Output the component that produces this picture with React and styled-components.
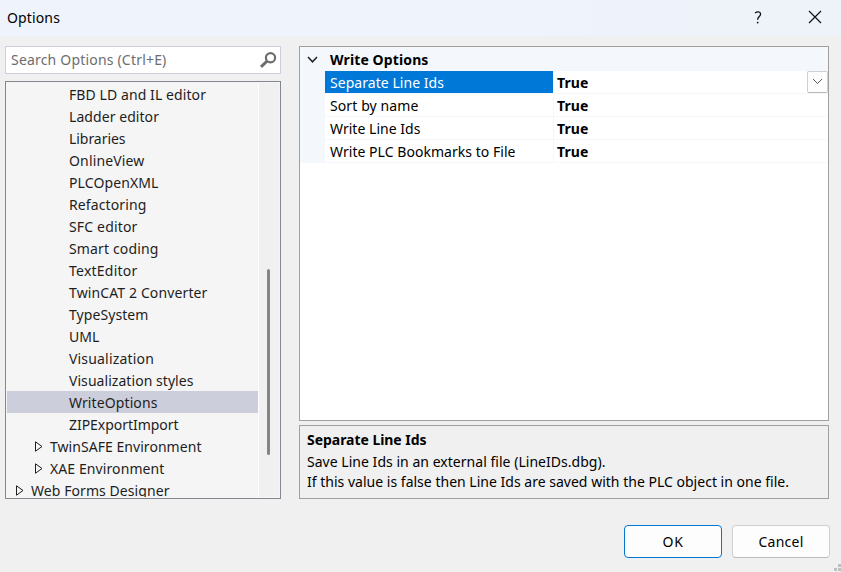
import React, { useLayoutEffect, useRef, useState } from "react";
import styled, { createGlobalStyle } from "styled-components";

const GlobalStyle = createGlobalStyle`
  *, *::before, *::after { box-sizing: border-box; }
  body { margin: 0; overflow: hidden; }
`;

const Dialog = styled.div`
  position: relative;
  display: flex;
  flex-direction: column;
  width: 841px;
  height: 572px;
  overflow: hidden;
  background: #f0f0f0;
  color: #000;
  font-family: "Noto Sans", "Open Sans", sans-serif;
  font-size: 14px;
  line-height: 20px;
`;

const TitleBar = styled.header`
  display: flex;
  align-items: center;
  height: 36px;
  flex: none;
  padding: 0 19px 2px 7px;
  background: linear-gradient(90deg, #eef3fc 0 65%, #eef3f9);
`;

const TitleText = styled.div`
  flex: 1;
  padding-top: 1px;
`;

const TitleButton = styled.button`
  display: flex;
  padding: 0;
  border: 0;
  background: none;
  margin-left: ${(p) => p.$gap || 0}px;
`;

const Content = styled.main`
  display: flex;
  flex: none;
  gap: 18px;
  height: 463px;
  padding: 10px 12px 0 5px;
`;

const Sidebar = styled.section`
  display: flex;
  flex-direction: column;
  gap: 7px;
  width: 276px;
`;

const SearchBox = styled.div`
  display: flex;
  flex: none;
  align-items: center;
  justify-content: space-between;
  height: 28px;
  padding: 0 3px 0 5px;
  border: 1px solid #cccedb;
  background: #fff;
  color: #6d6d6d;
`;

const Tree = styled.div`
  display: flex;
  flex: none;
  height: 418px;
  border: 1px solid #828790;
  background: #f5f5f5;
  color: #1e1e1e;
`;

const TreeList = styled.div`
  width: 252px;
  height: 415px;
  padding: 1px 0 0 1px;
  overflow: hidden;
`;

const TreeRow = styled.div`
  display: flex;
  align-items: center;
  height: 22px;
  padding: 1px 0 0 ${(p) => p.$indent}px;
  background: ${(p) => (p.$selected ? "#cccedb" : "transparent")};
`;

const Expander = styled.svg`
  flex: none;
  margin-right: 7px;
`;

const ScrollTrack = styled.div`
  width: 21px;
  margin: 1px 1px 1px 0;
  padding: 186px 0 0 8px;
  border-left: 1px solid #fff;
  background: #f0f0f0;
`;

const ScrollThumb = styled.div`
  width: 3px;
  height: 186px;
  border-radius: 1.5px;
  background: #858585;
`;

const Details = styled.section`
  display: flex;
  flex-direction: column;
  gap: 4px;
  flex: 1;
`;

const PropertyGrid = styled.div`
  flex: none;
  height: 375px;
  border: 1px solid #a0a0a0;
  background: #fff;
`;

const Category = styled.div`
  display: flex;
  align-items: center;
  height: 24px;
  padding: 2px 0 0 7px;
  gap: 11px;
  background: #f4f7fc;
  font-weight: 700;
`;

const PropertyRow = styled.div`
  display: grid;
  grid-template-columns: 228px 1px 1fr;
  height: 23px;
  margin-left: 25px;
  border-bottom: 1px solid #f4f7fc;
  box-shadow: -25px 0 0 #f4f7fc;
`;

const PropertyName = styled.div`
  display: flex;
  align-items: center;
  padding: 2px 0 0 5px;
  background: ${(p) => (p.$selected ? "#0078d7" : "#fff")};
  color: ${(p) => (p.$selected ? "#fff" : "#000")};
`;

const Divider = styled.div`
  background: #f4f7fc;
`;

const PropertyValue = styled.div`
  display: flex;
  justify-content: space-between;
  align-items: center;
  padding-left: 3px;
  background: #fff;
  font-weight: 700;
`;

const ValueText = styled.div`
  padding-top: 2px;
`;

const DropButton = styled.button`
  display: flex;
  align-items: center;
  justify-content: center;
  width: 21px;
  height: 22px;
  padding: 0 0 1px;
  border: 1px solid #d0d0d0;
  border-bottom-color: #bababa;
  border-radius: 2px;
  background: #fdfdfd;
`;

const Description = styled.div`
  flex: none;
  height: 74px;
  padding: 4px 7px;
  border: 1px solid #a0a0a0;
`;

const DescriptionTitle = styled.div`
  height: 22px;
  font-weight: 700;
`;

const DescriptionLine = styled.div`
  height: 20px;
`;

const Footer = styled.footer`
  display: flex;
  justify-content: flex-end;
  gap: 10px;
  padding: 26px 11px 0 0;
`;

const DialogButton = styled.button`
  width: 98px;
  height: 33px;
  padding: 0;
  border: 1px solid ${(p) => (p.$primary ? "#0078d4" : "#d0d0d0")};
  border-bottom-color: ${(p) => (p.$primary ? "#0078d4" : "#bcbcbc")};
  border-radius: 4px;
  background: #fdfdfd;
  color: #000;
  font: inherit;
`;

const ResizeGrip = styled.svg`
  position: absolute;
  right: 0;
  bottom: 0;
`;

const Span = styled.span`
  display: inline-block;
  white-space: pre;
`;

/* A caption whose tracking is adjusted so that it occupies a given width. */
function Caption({ width, children }) {
  const ref = useRef(null);
  const [spacing, setSpacing] = useState(0);
  useLayoutEffect(() => {
    const natural = ref.current.getBoundingClientRect().width;
    setSpacing((width - natural) / children.length);
  }, [width, children]);
  return (
    <Span ref={ref} style={{ letterSpacing: `${spacing}px` }}>
      {children}
    </Span>
  );
}

const leaves = [
  ["FBD LD and IL editor", 137],
  ["Ladder editor", 90],
  ["Libraries", 56.5],
  ["OnlineView", 75.5],
  ["PLCOpenXML", 89.5],
  ["Refactoring", 77.5],
  ["SFC editor", 68.5],
  ["Smart coding", 89.5],
  ["TextEditor", 68.5],
  ["TwinCAT 2 Converter", 138.5],
  ["TypeSystem", 79.5],
  ["UML", 30.5],
  ["Visualization", 85],
  ["Visualization styles", 124.5],
  ["WriteOptions", 88.5],
  ["ZIPExportImport", 109.5],
];

const properties = [
  ["Separate Line Ids", 114],
  ["Sort by name", 88.5],
  ["Write Line Ids", 90.5],
  ["Write PLC Bookmarks to File", 185.5],
];

const Arrow = () => (
  <Expander width="8" height="11" viewBox="0 0 8 11" fill="none" stroke="#1e1e1e">
    <path d="M.5 .8V10.2L7 5.5Z" />
  </Expander>
);

export default function App() {
  return (
    <Dialog>
      <GlobalStyle />
      <TitleBar>
        <TitleText>
          <Caption width={53}>Options</Caption>
        </TitleText>
        <TitleButton aria-label="Help">
          <svg width="8" height="13" viewBox="0 0 8 13" fill="none" stroke="#111" strokeWidth="1.3">
            <path d="M1 2C3.2.3 6.6.4 6.6 3.1C6.6 5.4 3.6 5.8 3.6 8.8" />
            <path d="M2.9 11.6H4.4" strokeWidth="1.6" />
          </svg>
        </TitleButton>
        <TitleButton aria-label="Close" $gap={46}>
          <svg width="14" height="14" viewBox="0 0 14 14" fill="none" stroke="#111" strokeWidth="1.2">
            <path d="M1 1L13 13M13 1L1 13" />
          </svg>
        </TitleButton>
      </TitleBar>
      <Content>
        <Sidebar>
          <SearchBox>
            <Caption width={155.5}>Search Options (Ctrl+E)</Caption>
            <svg width="18" height="18" viewBox="0 0 18 18" fill="none" stroke="#6d6d6d">
              <circle cx="11.5" cy="6.7" r="4.6" strokeWidth="2.2" />
              <path d="M8.2 10L2 15.8" strokeWidth="3" />
            </svg>
          </SearchBox>
          <Tree>
            <TreeList>
              {leaves.map(([name, width]) => (
                <TreeRow key={name} $indent={62} $selected={name === "WriteOptions"}>
                  <Caption width={width}>{name}</Caption>
                </TreeRow>
              ))}
              <TreeRow $indent={28}>
                <Arrow />
                <Caption width={151.5}>TwinSAFE Environment</Caption>
              </TreeRow>
              <TreeRow $indent={28}>
                <Arrow />
                <Caption width={114.5}>XAE Environment</Caption>
              </TreeRow>
              <TreeRow $indent={9}>
                <Arrow />
                <Caption width={138.5}>Web Forms Designer</Caption>
              </TreeRow>
            </TreeList>
            <ScrollTrack>
              <ScrollThumb />
            </ScrollTrack>
          </Tree>
        </Sidebar>
        <Details>
          <PropertyGrid>
            <Category>
              <svg width="12" height="8" viewBox="0 0 12 8" fill="none" stroke="#222" strokeWidth="1.5">
                <path d="M1 1L5.5 5.8L10 1" />
              </svg>
              <Caption width={98.5}>Write Options</Caption>
            </Category>
            {properties.map(([name, width], i) => (
              <PropertyRow key={name}>
                <PropertyName $selected={i === 0}>
                  <Caption width={width}>{name}</Caption>
                </PropertyName>
                <Divider />
                <PropertyValue>
                  <ValueText>
                    <Caption width={31.5}>True</Caption>
                  </ValueText>
                  {i === 0 && (
                    <DropButton aria-label="Open list">
                      <svg width="11" height="7" viewBox="0 0 11 7" fill="none" stroke="#555">
                        <path d="M1 1L5.5 5.5L10 1" />
                      </svg>
                    </DropButton>
                  )}
                </PropertyValue>
              </PropertyRow>
            ))}
          </PropertyGrid>
          <Description>
            <DescriptionTitle>
              <Caption width={119.5}>Separate Line Ids</Caption>
            </DescriptionTitle>
            <DescriptionLine>
              <Caption width={298.5}>Save Line Ids in an external file (LineIDs.dbg).</Caption>
            </DescriptionLine>
            <DescriptionLine>
              <Caption width={482}>
                If this value is false then Line Ids are saved with the PLC object in one file.
              </Caption>
            </DescriptionLine>
          </Description>
        </Details>
      </Content>
      <Footer>
        <DialogButton $primary>
          <Caption width={21}>OK</Caption>
        </DialogButton>
        <DialogButton>
          <Caption width={45}>Cancel</Caption>
        </DialogButton>
      </Footer>
      <ResizeGrip width="7" height="8" viewBox="0 0 7 8" fill="#bfbfbf">
        <path d="M4 0h3v3H4zM0 4h3v3H0zM4 4h3v3H4z" />
      </ResizeGrip>
    </Dialog>
  );
}
